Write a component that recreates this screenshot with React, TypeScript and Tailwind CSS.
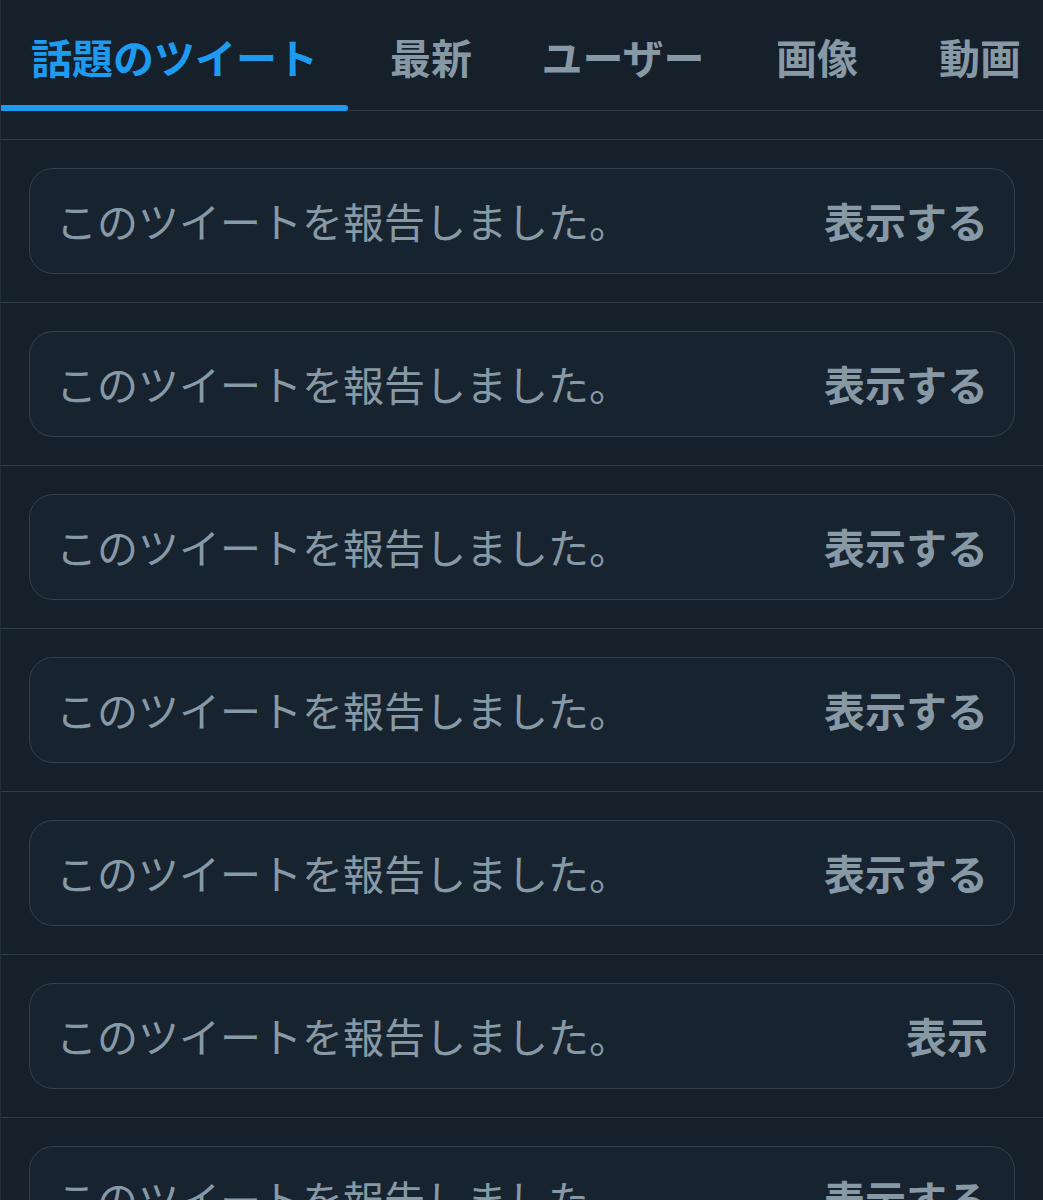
import React from 'react';

const tabs = [
  { label: '話題のツイート', w: 'w-[347px]', active: true },
  { label: '最新', w: 'w-[166px]', active: false },
  { label: 'ユーザー', w: 'w-[218px]', active: false },
  { label: '画像', w: 'w-[170px]', active: false },
  { label: '動画', w: 'w-[156px]', active: false },
];

const rows = ['表示する', '表示する', '表示する', '表示する', '表示する', '表示', '表示する'];

const App: React.FC = () => {
  return (
    <div
      className="bg-[#15202b] min-h-screen overflow-hidden border-l border-[#222e39]"
      style={{ fontFamily: '"Noto Sans CJK JP", "Noto Sans", sans-serif' }}
    >
      <div className="flex h-[111px] border-b border-[#2f3b47] whitespace-nowrap">
        {tabs.map((t) => (
          <div key={t.label} className={`${t.w} shrink-0 relative flex justify-center pt-[28px]`}>
            <span
              className={`text-[41px] leading-[56px] font-bold ${t.active ? 'text-[#1d9bf0]' : 'text-[#8899a6]'}`}
            >
              {t.label}
            </span>
            {t.active && <div className="absolute left-[-1px] right-0 bottom-[-1px] h-[6px] bg-[#1d9bf0] rounded-r-sm" />}
          </div>
        ))}
      </div>
      <div className="h-[29px] border-b border-[#2f3b47]" />
      {rows.map((action, i) => (
        <div key={i} className="h-[163px] border-b border-[#2f3b47] px-[28px] pt-[28px]">
          <div className="h-[106px] rounded-[24px] border border-[#34414d] bg-[#172430] flex items-center justify-between pl-[26px] pr-[26px]">
            <span className="text-[41px] text-[#8899a6]">このツイートを報告しました。</span>
            <span className="text-[41px] font-bold text-[#8899a6]">{action}</span>
          </div>
        </div>
      ))}
    </div>
  );
};

export default App;
